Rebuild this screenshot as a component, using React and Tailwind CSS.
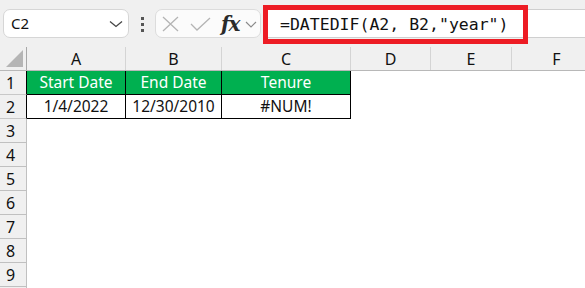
import React from "react";

const COLS = [
  { k: "A", w: "w-[99px]" },
  { k: "B", w: "w-[96px]" },
  { k: "C", w: "w-[129px]" },
  { k: "D", w: "w-[80px]" },
  { k: "E", w: "w-[81px]" },
  { k: "F", w: "w-[90px]" },
];

const cellFont = { fontFamily: '"Noto Sans", sans-serif' };

function Toolbar() {
  return (
    <div className="flex h-[47px] shrink-0 items-start bg-[#f0f0f0] pt-[9px]">
      {/* Name box */}
      <div className="ml-[3px] flex h-[29px] w-[126px] items-center justify-between rounded-[7px] border border-[#d6d6d6] bg-white pl-[7px] pr-[5px]">
        <span className="text-[15px] text-[#111]" style={cellFont}>C2</span>
        <svg width="14" height="8" viewBox="0 0 14 8">
          <path d="M1 1.5 L7 6.5 L13 1.5" fill="none" stroke="#444" strokeWidth="1.3" />
        </svg>
      </div>
      {/* dots */}
      <div className="ml-[12px] mt-[8px] flex w-[4px] flex-col gap-[3px]">
        <div className="h-[3px] w-[3px] bg-[#555]" />
        <div className="h-[3px] w-[3px] bg-[#555]" />
        <div className="h-[3px] w-[3px] bg-[#555]" />
      </div>
      {/* formula buttons */}
      <div className="ml-[10px] flex h-[29px] w-[106px] items-center rounded-[7px] border border-[#dcdcdc] bg-[#fbfbfb] pl-[6px]">
        <svg width="17" height="16" viewBox="0 0 17 16">
          <path d="M1 1 L16 15 M16 1 L1 15" stroke="#b4b4b4" strokeWidth="1.3" fill="none" />
        </svg>
        <svg width="21" height="14" viewBox="0 0 21 14" className="ml-[11px]">
          <path d="M1 7 L7 13 L20 1" stroke="#b4b4b4" strokeWidth="1.3" fill="none" />
        </svg>
        <span
          className="ml-[10px] text-[20px] font-bold italic leading-none text-[#2a2a2a]"
          style={{ fontFamily: '"DejaVu Serif", "Liberation Serif", serif', letterSpacing: "-1px" }}
        >
          fx
        </span>
        <svg width="12" height="7" viewBox="0 0 12 7" className="ml-[5px] mt-[2px]">
          <path d="M1 1 L6 6 L11 1" stroke="#8a8a8a" strokeWidth="1.1" fill="none" />
        </svg>
      </div>
      {/* formula input */}
      <div className="relative ml-[2px] h-[29px] flex-1 border-y border-[#cfcfcf] bg-white">
        <div className="absolute left-0 top-[-5px] flex h-[39px] w-[265px] items-center border-[5px] border-[#ed1c24] pl-[12px] pt-[2px]">
          <span
            className="whitespace-pre text-[16.5px] leading-none text-[#111]"
            style={{ fontFamily: '"DejaVu Sans Mono", "Liberation Mono", monospace' }}
          >
            =DATEDIF(A2, B2,"year")
          </span>
        </div>
      </div>
    </div>
  );
}

function HeaderRow() {
  return (
    <div className="flex h-[24px] shrink-0 border-b border-[#b8b8b8] bg-[#f0f0f0]">
      <div className="relative flex w-[27px] shrink-0 items-end justify-end border-r border-[#a8a8a8] pb-[3px] pr-[3px]">
        <svg width="17" height="17" viewBox="0 0 17 17">
          <path d="M17 0 L17 17 L0 17 Z" fill="#b5b5b5" />
        </svg>
      </div>
      {COLS.map((c) => (
        <div
          key={c.k}
          className={`${c.w} flex shrink-0 items-center justify-center border-r border-[#d4d4d4] text-[16px] text-[#111]`}
          style={cellFont}
        >
          {c.k}
        </div>
      ))}
    </div>
  );
}

function DataRow({ n, cells, green }) {
  return (
    <div className="flex h-[24px] shrink-0">
      <div
        className={`flex w-[27px] shrink-0 items-center border-b border-r bg-[#f0f0f0] pl-[6px] text-[16px] text-[#111] ${
          cells ? "border-r-black border-b-[#c8c8c8]" : "border-[#c0c0c0]"
        }`}
        style={cellFont}
      >
        {n}
      </div>
      {COLS.map((c, i) => {
        const inTable = cells && i < 3;
        return (
          <div
            key={c.k}
            className={`${c.w} flex shrink-0 items-center justify-center text-[15.5px] ${
              inTable
                ? `border-b border-r border-black ${green ? "bg-[#00b050] text-white" : "bg-white text-[#111]"}`
                : "bg-white"
            }`}
            style={cellFont}
          >
            {inTable ? cells[i] : ""}
          </div>
        );
      })}
    </div>
  );
}

export default function App() {
  const rows = [3, 4, 5, 6, 7, 8, 9];
  return (
    <div className="flex h-[288px] w-[585px] flex-col overflow-hidden bg-white">
      <Toolbar />
      <HeaderRow />
      <DataRow n={1} cells={["Start Date", "End Date", "Tenure"]} green />
      <DataRow n={2} cells={["1/4/2022", "12/30/2010", "#NUM!"]} />
      {rows.map((r) => (
        <DataRow key={r} n={r} />
      ))}
      <DataRow n="" />
    </div>
  );
}
